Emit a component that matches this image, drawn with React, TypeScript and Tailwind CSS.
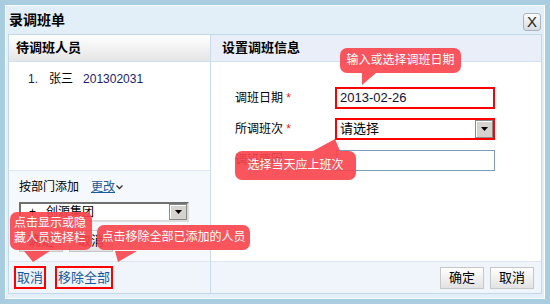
const font = { fontFamily: '"Liberation Sans", "Noto Sans CJK SC", sans-serif' };

function Tip({ className, children, arrow }: { className: string; children: React.ReactNode; arrow: string }) {
  return (
    <div className={`absolute ${className}`}>
      <div className="relative rounded-[7px] bg-[#f9434b]/90 text-white text-[12px] leading-[15px]">
        {children}
      </div>
      <svg className="absolute" style={{ left: 0, top: 0, overflow: "visible" }} width="1" height="1">
        <path d={arrow} fill="#f9434b" fillOpacity="0.9" />
      </svg>
    </div>
  );
}

function Btn({ children }: { children: React.ReactNode }) {
  return (
    <button className="h-[22px] w-[44px] border border-[#c7c7c7] bg-gradient-to-b from-white to-[#e2e2e2] p-0 text-[13px] text-black">
      {children}
    </button>
  );
}

function Arrow() {
  return (
    <div className="flex h-full w-[18px] items-center justify-center border border-[#8a8a8a] bg-[#d6d3ce] shadow-[inset_1px_1px_0_#fff]">
      <svg width="7" height="4" viewBox="0 0 7 4">
        <path d="M0 0h7L3.5 4z" fill="#000" />
      </svg>
    </div>
  );
}

export default function App() {
  return (
    <div className="relative h-[304px] w-[550px] bg-[#a8cde1] p-[5px]" style={font}>
      <div className="flex h-[294px] flex-col border border-white bg-[#e3eff8]">
        {/* title */}
        <div className="flex h-[28px] items-center justify-between pl-[3px] pr-[3px]">
          <span className="text-[14px] font-bold text-black">录调班单</span>
          <button className="mt-[3px] flex h-[18px] w-[18px] items-center justify-center rounded-[3px] border border-[#a9b4bf] bg-gradient-to-b from-[#fbfcfd] to-[#d6dde4] p-0 text-[15px] leading-none text-[#222]">
            X
          </button>
        </div>

        {/* panel */}
        <div className="mx-[2px] flex h-[260px] border border-[#c3d9ea]">
          {/* left */}
          <div className="flex w-[202px] flex-col border-r border-[#c9dced]">
            <div className="flex h-[27px] items-center border-b border-[#d5e2ef] bg-gradient-to-b from-white to-[#e5e5e5] pl-[7px] text-[13px] font-bold">
              待调班人员
            </div>
            <div className="h-[108px] bg-white pl-[19px] pt-[8px] text-[12px]">
              <span className="text-[#1c1c4a]">1.</span>
              <span className="ml-[11px]">张三</span>
              <span className="ml-[10px] text-[#1c1c6e]">201302031</span>
            </div>
            <div className="flex flex-1 flex-col border-t border-[#dde6f2] bg-[#f5f8fd] pl-[10px] pt-[7px] text-[12px]">
              <div className="flex items-center">
                <span>按部门添加</span>
                <span className="ml-[12px] text-[#1a5a9c] underline">更改</span>
                <svg className="ml-[1px]" width="7" height="5" viewBox="0 0 7 5">
                  <path d="M0.5 0.5L3.5 3.5L6.5 0.5" stroke="#333" fill="none" strokeWidth="1.3" />
                </svg>
              </div>
              <div className="mt-[6px] flex h-[20px] w-[170px] items-center border-2 border-[#707070] border-b-[#dcdcdc] border-r-[#dcdcdc] bg-white">
                <span className="flex-1 pl-[8px]">+&nbsp;&nbsp;&nbsp;创源集团</span>
                <Arrow />
              </div>
              <div className="mt-[8px] flex gap-[6px]">
                <Btn>确定</Btn>
                <Btn>取消</Btn>
              </div>
            </div>
            <div className="flex h-[32px] items-center gap-[9px] border-t border-[#dde6f2] bg-[#f0f4fb] pl-[5px] text-[13px] text-[#1a5a9c]">
              <span className="border-2 border-[#ff0000] px-[1px] leading-[19px]">取消</span>
              <span className="border-2 border-[#ff0000] px-[1px] leading-[19px]">移除全部</span>
            </div>
          </div>

          {/* right */}
          <div className="flex flex-1 flex-col">
            <div className="flex h-[27px] items-center border-b border-[#d5e2ef] bg-[#e9eef9] pl-[11px] text-[13px] font-bold">
              设置调班信息
            </div>
            <div className="flex flex-1 flex-col gap-[9px] bg-white pl-[24px] pt-[25px] text-[12px]">
              <div className="flex h-[22px] items-center">
                <span className="w-[100px]">
                  调班日期 <span className="text-[#e01b1b]">*</span>
                </span>
                <div className="flex h-[22px] w-[160px] items-center border-2 border-[#ff0000] pl-[3px] text-[13px] text-[#101030]">
                  2013-02-26
                </div>
              </div>
              <div className="flex h-[22px] items-center">
                <span className="w-[100px]">
                  所调班次 <span className="text-[#e01b1b]">*</span>
                </span>
                <div className="flex h-[22px] w-[160px] items-center border-2 border-[#ff0000] bg-white">
                  <span className="flex-1 pl-[3px] text-[13px]">请选择</span>
                  <div className="h-[18px]">
                    <Arrow />
                  </div>
                </div>
              </div>
              <div className="flex h-[22px] items-center">
                <span className="w-[101px]">调班原因</span>
                <div className="h-[21px] w-[159px] border border-[#7f9db9]" />
              </div>
            </div>
            <div className="flex h-[32px] items-center justify-end gap-[6px] border-t border-[#dde6f2] bg-[#f0f4fb] pr-[7px]">
              <Btn>确定</Btn>
              <Btn>取消</Btn>
            </div>
          </div>
        </div>
      </div>

      {/* tooltips */}
      <Tip className="left-[340px] top-[48px]" arrow="M22 25L36 25L22 37Z">
        <div className="w-[121px] py-[5px] text-center">输入或选择调班日期</div>
      </Tip>
      <Tip className="left-[235px] top-[151px]" arrow="M78 0L105 0L100 -12Z">
        <div className="w-[121px] py-[7px] text-center">选择当天应上班次</div>
      </Tip>
      <Tip className="left-[10px] top-[212px]" arrow="M14 39L40 39L23 50Z">
        <div className="w-[82px] py-[4px] pl-[4px]">
          点击显示或隐
          <br />
          藏人员选择栏
        </div>
      </Tip>
      <Tip className="left-[97px] top-[225px]" arrow="M18 26L40 26L21 37Z">
        <div className="w-[153px] py-[5px] text-center">点击移除全部已添加的人员</div>
      </Tip>
    </div>
  );
}
